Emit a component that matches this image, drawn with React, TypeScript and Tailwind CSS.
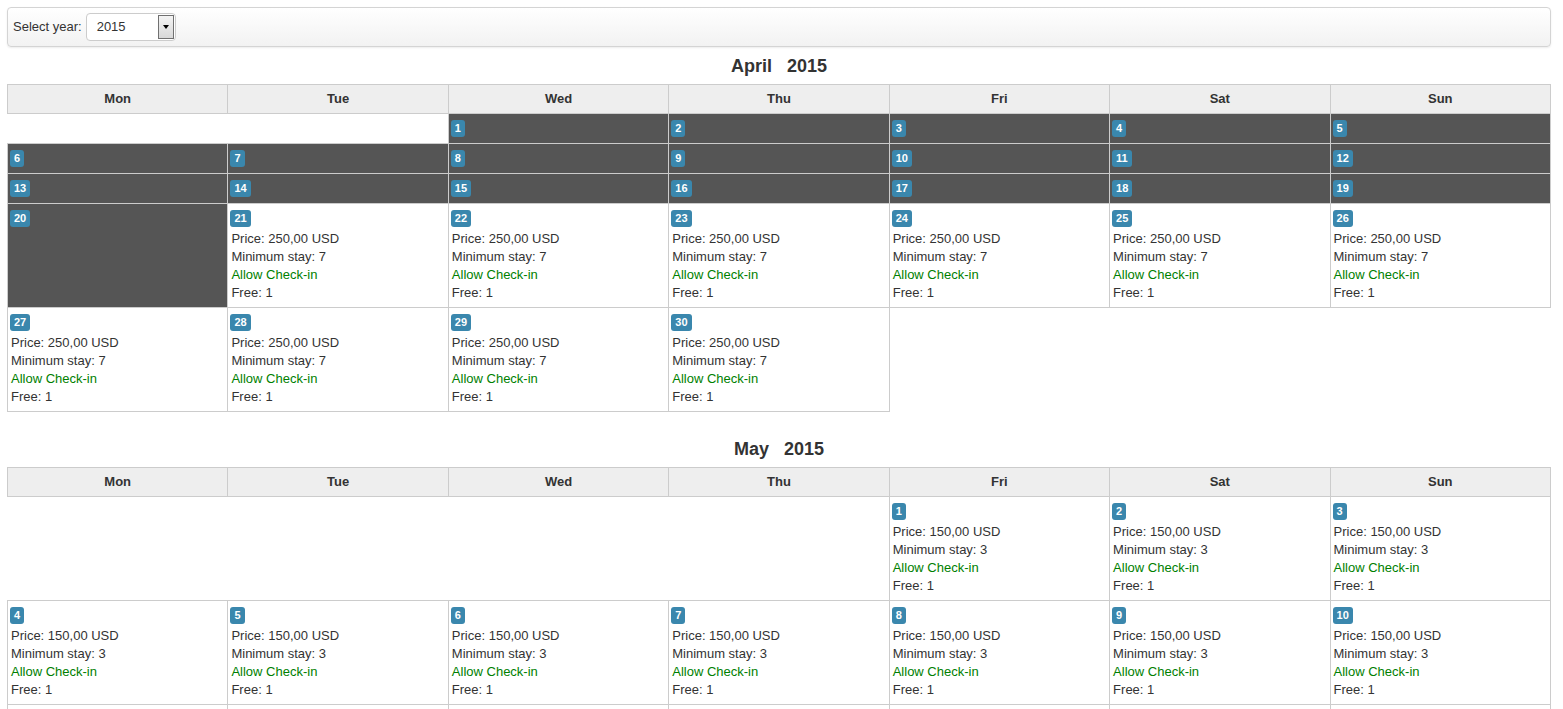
import React from "react";

type Day = {
  day: number;
  past?: boolean;
  price?: string;
  stay?: number;
};

const weekdays = ["Mon", "Tue", "Wed", "Thu", "Fri", "Sat", "Sun"];

function buildMonth(
  offset: number,
  days: number,
  pastUntil: number,
  price: string,
  stay: number
): (Day | null)[][] {
  const cells: (Day | null)[] = [];
  for (let i = 0; i < offset; i++) cells.push(null);
  for (let d = 1; d <= days; d++) {
    cells.push(
      d <= pastUntil ? { day: d, past: true } : { day: d, price, stay }
    );
  }
  while (cells.length % 7 !== 0) cells.push(null);
  const rows: (Day | null)[][] = [];
  for (let i = 0; i < cells.length; i += 7) rows.push(cells.slice(i, i + 7));
  return rows;
}

const months = [
  { name: "April", year: 2015, rows: buildMonth(2, 30, 20, "250,00 USD", 7) },
  { name: "May", year: 2015, rows: buildMonth(4, 31, 0, "150,00 USD", 3) },
];

function Badge({ n }: { n: number }) {
  return (
    <span className="inline-block h-[17px] min-w-[14px] rounded-[3px] bg-[#3a87ad] px-[4px] text-[11px] font-bold leading-[17px] text-white">
      {n}
    </span>
  );
}

function DayCell({ cell }: { cell: Day | null }) {
  if (!cell) return <td className="p-0" />;
  if (cell.past) {
    return (
      <td className="border border-[#ccc] bg-[#555] px-[2px] pt-[6px] pb-[6px] align-top">
        <div className="flex h-[17px] items-start">
          <Badge n={cell.day} />
        </div>
      </td>
    );
  }
  return (
    <td className="border border-[#ccc] bg-white px-[3px] pt-[6px] pb-[5px] align-top">
      <div className="-ml-[1px] flex h-[17px] items-start">
        <Badge n={cell.day} />
      </div>
      <div className="mt-[3px] text-[13px] leading-[18px] text-[#333]">
        <div>Price: {cell.price}</div>
        <div>Minimum stay: {cell.stay}</div>
        <div className="text-[#008000]">Allow Check-in</div>
        <div>Free: 1</div>
      </div>
    </td>
  );
}

function MonthTable({
  name,
  year,
  rows,
}: {
  name: string;
  year: number;
  rows: (Day | null)[][];
}) {
  return (
    <section>
      <h2 className="flex h-[37px] items-center justify-center pt-[2px] text-[18px] font-bold text-[#333] whitespace-pre">
        {name}   {year}
      </h2>
      <table className="w-full table-fixed border-collapse">
        <thead>
          <tr>
            {weekdays.map((w) => (
              <th
                key={w}
                className="h-[29px] border border-[#ccc] bg-[#eee] p-0 text-center text-[13px] font-bold text-[#333]"
              >
                {w}
              </th>
            ))}
          </tr>
        </thead>
        <tbody>
          {rows.map((row, i) => (
            <tr key={i}>
              {row.map((cell, j) => (
                <DayCell key={j} cell={cell} />
              ))}
            </tr>
          ))}
        </tbody>
      </table>
    </section>
  );
}

export default function App() {
  return (
    <div
      className="min-h-screen bg-white pl-[7px] pr-[12px] pt-[7px]"
      style={{ fontFamily: '"Liberation Sans", Arial, sans-serif' }}
    >
      <div className="flex h-[40px] items-center rounded-[4px] border border-[#d4d4d4] bg-gradient-to-b from-white to-[#f2f2f2] px-[5px] shadow-[0_1px_2px_rgba(0,0,0,0.08)]">
        <span className="text-[13px] text-[#333]">Select year:</span>
        <div className="ml-[4px] flex h-[28px] w-[90px] items-stretch rounded-[4px] border border-[#ccc] bg-white">
          <span className="flex flex-1 items-center pl-[10px] text-[13px] text-[#333]">
            2015
          </span>
          <div className="my-[1px] mr-[1px] flex w-[16px] items-center justify-center border border-[#707070] bg-gradient-to-b from-[#f4f4f4] to-[#d8d8d8]">
            <span className="block h-0 w-0 border-x-[3.5px] border-t-[4px] border-x-transparent border-t-black" />
          </div>
        </div>
      </div>
      <MonthTable {...months[0]} />
      <div className="mt-[18px]">
        <MonthTable {...months[1]} />
      </div>
    </div>
  );
}
